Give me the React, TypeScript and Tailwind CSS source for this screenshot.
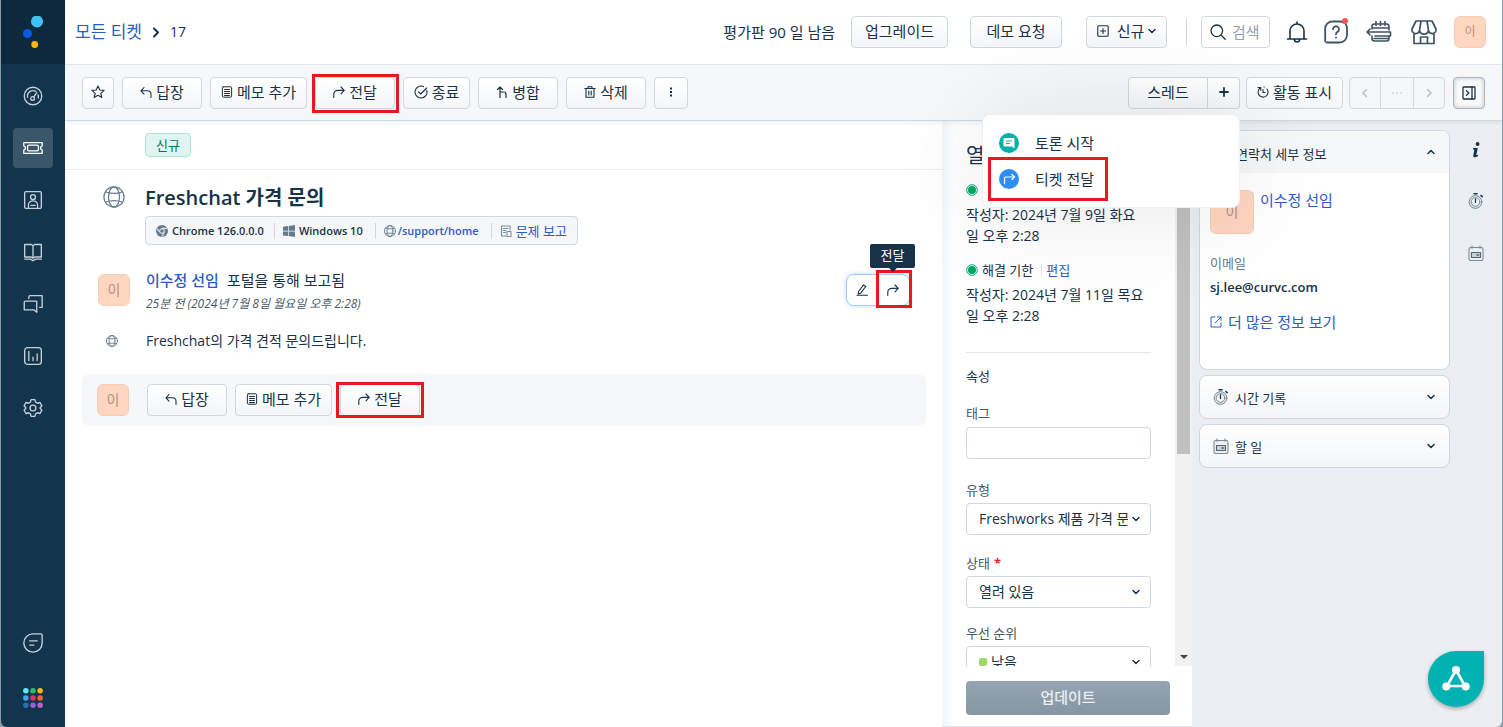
import React from "react";

type P = { className?: string };

function Svg({ className = "size-4", w = 1.5, children, box = 24 }: { className?: string; w?: number; children: React.ReactNode; box?: number }) {
  return (
    <svg className={`shrink-0 ${className}`} viewBox={`0 0 ${box} ${box}`} fill="none" stroke="currentColor" strokeWidth={w} strokeLinecap="round" strokeLinejoin="round" aria-hidden="true">
      {children}
    </svg>
  );
}

const Reply = ({ className = "size-3" }: P) => (
  <Svg className={className} box={12} w={1.1}><path d="M4 1.500 1 4.800l3 3.300M1 4.800h6.200c2.300 0 3.800 1.400 3.800 3.400v3.300" /></Svg>
);
const Forward = ({ className = "size-3" }: P) => (
  <Svg className={className} box={12} w={1.1}><path d="m8 1 3.200 3.400L8 7.800M11.200 4.400H5C2.400 4.400.8 5.900.8 8v3.500" /></Svg>
);
const Note = () => (
  <Svg className="size-3" box={12} w={1}><path d="M2.200.8h7.600a.8.8 0 0 1 .8.8v8.600a1 1 0 0 1-1 1H2.400a1 1 0 0 1-1-1V1.600a.8.8 0 0 1 .8-.8ZM3.500 3.500h5M3.500 5.500h5M3.500 7.500h5M3.500 9.500h5" /></Svg>
);
const Globe = ({ className = "size-3", w = 1.5 }: P & { w?: number }) => (
  <Svg className={className} w={w}>
    <circle cx="12" cy="12" r="11" />
    <ellipse cx="12" cy="12" rx="6" ry="11" />
    <path d="M3 6.500c5 1.800 13 1.800 18 0M3 17.500c5-1.800 13-1.800 18 0" />
  </Svg>
);
const Chevron = ({ className = "size-2" }: P) => (
  <Svg className={className} box={8} w={1.5}><path d="m1 2.500 3 3 3-3" /></Svg>
);
const Stopwatch = () => (
  <Svg className="size-4" box={16} w={1}>
    <g className="text-[#7c8996]">
      <circle cx="7.500" cy="9" r="6.400" stroke="currentColor" fill="#dfe4e9" />
      <circle cx="7.500" cy="9" r="4.300" stroke="currentColor" fill="#f5f7f9" />
    </g>
    <path d="M6 .8h3M13 2.600l1.200 1" stroke="#12344d" strokeWidth="1.600" />
    <path d="M7.500 6v3.500" stroke="#12344d" strokeWidth="1.300" />
  </Svg>
);
const Calendar = () => (
  <Svg className="size-4" box={16} w={1.100}>
    <g stroke="#7c8996">
      <rect x="1" y="2.500" width="14" height="13" rx="1.800" fill="#eef1f4" />
      <path d="M4 .8v2.400M12 .8v2.400" />
      <rect x="3.500" y="7.500" width="9" height="5" fill="#c9d1d9" stroke="#526475" />
      <path d="M9 10h1.500" stroke="#526475" strokeWidth="1.600" />
    </g>
  </Svg>
);

const btn = "flex h-8 items-center justify-center gap-1 rounded border border-[#cfd7df] bg-linear-to-b from-white to-[#f3f5f7] pb-0.5 text-[15px] leading-5 text-[#183247] whitespace-nowrap";

function RedBox({ className }: { className: string }) {
  return <span aria-hidden="true" className={`pointer-events-none absolute border-3 border-[#e8191c] ${className}`} />;
}

function Avatar({ className = "size-8 text-sm" }: P) {
  return <span className={`flex shrink-0 items-center justify-center rounded-md border border-[#f5ccb4] bg-[#ffd6c0] text-[#b3907c] ${className}`}>이</span>;
}

const nav = [
  { label: "대시보드", icon: <><circle cx="12" cy="12" r="10.500" /><path d="M5.500 13.500a6.700 6.700 0 0 1 10-7M18 10.500a6.500 6.500 0 0 1 .3 4M12.800 13.200l3.700-5.200" /><circle cx="11.500" cy="15" r="2.200" /></> },
  { label: "티켓", icon: <><path d="M1 5.500h22v4a2.600 2.600 0 0 0 0 5v4H1v-4a2.600 2.600 0 0 0 0-5Z" /><rect x="5.500" y="8.500" width="13" height="7" rx="1.800" /></> },
  { label: "연락처", icon: <><rect x="2" y="2" width="20" height="20" rx="1.500" /><circle cx="12" cy="8.500" r="3" /><path d="M6.500 21.500v-3.500a5.500 5 0 0 1 11 0v3.500M9.500 18.500h5" /></> },
  { label: "솔루션", icon: <><path d="M2 3h8l2 1.500L14 3h8v15h-8l-2 1.500L10 18H2ZM12 4.500v15M2 20.500h7l3 2 3-2h7" /></> },
  { label: "포럼", icon: <><path d="M7 5.500V3.500A1.500 1.500 0 0 1 8.500 2H23v14h-3M1.500 10A1.500 1.500 0 0 1 3 8.500h13.500v13.500L13 19H1.500Z" /></> },
  { label: "분석", icon: <><rect x="2" y="2" width="20" height="20" rx="3.500" /><path d="M7 6.500v11M12 13.500v4M17 9.500v8" /></> },
  { label: "관리자", icon: <><path d="M9.700 2h4.600l.8 3 2.300 1.300 3-.9 2.300 4-2.200 2.200v.8l2.200 2.200-2.300 4-3-.9-2.300 1.300-.8 3H9.700l-.8-3-2.300-1.300-3 .9-2.300-4 2.200-2.200v-.8L1.300 9.400l2.300-4 3 .9L8.900 5Z" /><circle cx="12" cy="12" r="3.500" /></> },
];

function Sidebar() {
  const dots = ["#5fe9f0", "#2dbd6e", "#ffb800", "#4a9ff5", "#d7375f", "#f26522", "#2c6cb0", "#9c5fd0", "#c45fd0"];
  return (
    <nav className="flex w-16 shrink-0 flex-col items-center rounded-bl-md bg-[#12344d] text-[#c5d0d9]" aria-label="주 메뉴">
      <a href="#home" aria-label="Freshdesk" className="flex h-16 w-full items-center justify-center bg-[#0e293d]">
        <svg className="size-8" viewBox="0 0 32 32">
          <circle cx="20" cy="5.500" r="6" fill="#40c4f5" />
          <circle cx="10.500" cy="17.500" r="4.500" fill="#0a5be0" />
          <circle cx="17.700" cy="28.500" r="3.400" fill="#fcb900" />
        </svg>
      </a>
      <div className="flex flex-col gap-3 pt-3">
        {nav.map((n, i) => (
          <a key={n.label} href="#nav" aria-label={n.label} className={`flex size-10 items-center justify-center rounded ${i === 1 ? "bg-[#3a566b] text-white" : ""}`}>
            <Svg className="size-5" w={1.6}>{n.icon}</Svg>
          </a>
        ))}
      </div>
      <div className="mt-auto flex flex-col items-center gap-[35px] pb-[19px]">
        <a href="#chat" aria-label="채팅"><Svg className="size-5" w={1.600}><path d="M12 1h9a2 2 0 0 1 2 2v9A11 11 0 1 1 12 1ZM8 9.500h9M8 14.500h5" /></Svg></a>
        <a href="#apps" aria-label="앱 전환">
          <svg className="size-5" viewBox="0 0 21 21">
            {dots.map((c, i) => <circle key={c} cx={3 + (i % 3) * 7.500} cy={3 + Math.floor(i / 3) * 7.500} r="2.900" fill={c} />)}
          </svg>
        </a>
      </div>
    </nav>
  );
}

function Header() {
  return (
    <header className="flex h-[65px] shrink-0 items-center border-b border-[#e4e8ed] bg-white pr-4 pl-[10px] text-[#183247]">
      <a href="#tickets" className="text-[17px] leading-6 text-[#2c5cc5]">모든 티켓</a>
      <Svg className="mx-2 size-3" box={12} w={2}><path d="m4 2.500 4 4-4 4" /></Svg>
      <span className="text-[14px] leading-6">17</span>
      <span className="mr-4 ml-auto text-[15px] leading-5">평가판 90 일 남음</span>
      <button className={`${btn} w-[97px]`}>업그레이드</button>
      <button className={`${btn} ml-[22px] w-[92px]`}>데모 요청</button>
      <button className={`${btn} ml-6 w-[81px]`}>
        <Svg className="size-3" box={12} w={1.1}><rect x=".8" y=".8" width="10.400" height="10.400" rx="1" /><path d="M6 3.500v5M3.500 6h5" /></Svg>
        <span className="pl-1">신규</span><Chevron />
      </button>
      <span className="mr-[14px] ml-[19px] h-7 w-px bg-[#cfd7df]" />
      <label className="flex h-8 w-[69px] items-center gap-1.5 rounded border border-[#cfd7df] pl-2">
        <Svg className="size-4" box={16} w={1.3}><circle cx="6.800" cy="6.800" r="5.800" /><path d="m11 11 4.200 4.200" /></Svg>
        <input aria-label="검색" placeholder="검색" className="w-9 text-[15px] leading-5 outline-none placeholder:text-[#92a2b1]" />
      </label>
      <button aria-label="알림" className="ml-4">
        <Svg className="size-[22px]" box={22} w={1.6}><path d="M1.500 18h19M4 18v-8a7 7 0 0 1 14 0v8M11 3V1M8.500 18.500a2.500 2.500 0 0 0 5 0" /></Svg>
      </button>
      <button aria-label="도움말" className="relative ml-4 text-[#3f5366]">
        <Svg className="size-6" w={1.800}><path d="M8 1.500h8a6.500 6.500 0 0 1 7 7V15a7.500 7.500 0 0 1-7.500 7.500H3A1.800 1.800 0 0 1 1.200 20.700V8.500A7 7 0 0 1 8 1.500ZM9 9.300a3 3 0 1 1 4.500 2.600c-1 .6-1.500 1.100-1.500 2.300M12 17.300v.3" /></Svg>
        <span className="absolute -top-0.5 right-0 size-1.5 rounded-full bg-[#ff5550]" />
      </button>
      <button aria-label="일정" className="ml-[18px] text-[#3f5366]">
        <Svg className="size-[26px]" box={26} w={1.600}><path d="M6 10V7.500A2.500 2.500 0 0 1 8.500 5h12A2.500 2.500 0 0 1 23 7.500V11M6 9h17M6 17v2.500A2.500 2.500 0 0 0 8.500 22h12a2.500 2.500 0 0 0 2.500-2.500V17M10 2.500v4M14.500 2.500v4M19 2.500v4M1 13h23.500v4H9M4 10l-3 3 3 3M8 19.500h14" /></Svg>
      </button>
      <button aria-label="마켓플레이스" className="ml-[19px] text-[#3f5366]">
        <Svg className="size-[26px]" box={26} w={1.700}><path d="M5 2h16l4 8a3.800 3.800 0 0 1-7.500 1.500 4.600 4.600 0 0 1-9 0A3.800 3.800 0 0 1 1 10ZM10 2l-1.500 9.500M16 2l1.500 9.500M3 14v10.500h20V14M9.500 24v-6h7v6" /></Svg>
      </button>
      <button aria-label="프로필" className="ml-[17px]"><Avatar className="size-8 text-xs" /></button>
    </header>
  );
}

function ThreadMenu() {
  return (
    <div role="menu" className="absolute top-[37px] right-0 z-20 flex w-[258px] flex-col rounded-lg border border-[#ebeff3] bg-white py-[10px] shadow-[0_4px_100px_rgba(0,0,0,0.1)]">
      <button role="menuitem" className="flex h-9 items-center gap-4 pl-4 text-left text-[15px] leading-5 text-[#183247]">
        <svg className="size-5" viewBox="0 0 20 20"><circle cx="10" cy="10" r="10" fill="#00b3a6" /><path d="M5.500 5h9a1 1 0 0 1 1 1v9.500L13 13.500H5.500a1 1 0 0 1-1-1V6a1 1 0 0 1 1-1Z" fill="#fff" /><path d="M7 8h6M7 10.500h4" stroke="#00b3a6" /></svg>
        토론 시작
      </button>
      <button role="menuitem" className="relative flex h-9 items-center gap-4 pl-4 text-left text-[15px] leading-5 text-[#183247]">
        <svg className="size-5" viewBox="0 0 20 20"><circle cx="10" cy="10" r="10" fill="#2c8df5" /><path d="M5.500 15V9.500A1.500 1.500 0 0 1 7 8h8.500M12.500 5l3 3-3 3" fill="none" stroke="#fff" strokeWidth="1.200" /></svg>
        티켓 전달
        <RedBox className="-top-1 left-[5px] h-11 w-[120px]" />
      </button>
    </div>
  );
}

function Toolbar() {
  return (
    <div className="relative z-10 flex h-14 shrink-0 items-center gap-2 border-b border-[#cfd7df] bg-[#f5f7f9] pr-[17px] pl-[17px] text-[#183247] shadow-[0_2px_4px_rgba(24,50,71,0.07)]">
      <button aria-label="즐겨찾기" className={`${btn} w-8`}>
        <Svg className="size-[14px]" box={14} w={1.1}><path d="m7 1 1.800 4 4.300.4-3.300 2.900 1 4.200L7 10.300l-3.800 2.200 1-4.200L.9 5.400 5.200 5Z" /></Svg>
      </button>
      <button className={`${btn} w-20`}><Reply />답장</button>
      <button className={`${btn} w-[97px]`}><Note />메모 추가</button>
      <div className="relative">
        <button className={`${btn} w-20`}><Forward />전달</button>
        <RedBox className="-top-[3px] -left-[3px] h-[39px] w-[87px]" />
      </div>
      <button className={`${btn} w-[67px]`}>
        <Svg className="size-[14px]" box={14} w={1.1}><path d="M12.800 5.500A6 6 0 1 1 9.500 1.600M4.500 6.800l2.200 2.200 6-6" /></Svg>종료
      </button>
      <button className={`${btn} w-20`}>
        <Svg className="size-3" box={12} w={1.200}><path d="M4 11.500V1M1.500 3.500 4 1l2.500 2.500M4 6h4c1.500 0 2 .8 2 2v3.500" /></Svg>병합
      </button>
      <button className={`${btn} w-20`}>
        <Svg className="size-3" box={12} w={1.1}><path d="M.8 2.500h10.400M4 2.300V.8h4v1.500M2 2.700v8.500h8V2.700M4.800 5v4M7.200 5v4" /></Svg>삭제
      </button>
      <button aria-label="더 보기" className={`${btn} w-[34px]`}>
        <svg className="size-3" viewBox="0 0 12 12" fill="currentColor"><rect x="5" y="1.500" width="2" height="2" /><rect x="5" y="5" width="2" height="2" /><rect x="5" y="8.500" width="2" height="2" /></svg>
      </button>
      <div className="ml-auto flex items-center gap-1.5">
        <div className="relative flex">
          <button className={`${btn} w-20 rounded-r-none`}>스레드</button>
          <button aria-label="스레드 추가" className={`${btn} w-8 rounded-l-none border-l-0`}>
            <Svg className="size-[10px]" box={10} w={1.800}><path d="M5 1v8M1 5h8" /></Svg>
          </button>
          <ThreadMenu />
        </div>
        <button className={`${btn} w-[97px]`}>
          <Svg className="size-3" box={12} w={1.1}><path d="M3.500 1.800a5 5 0 1 0 6.500 1.200M1 1.500h2.800v2.700M6 3.500V6.500h2M7 1h.2" /></Svg>활동 표시
        </button>
        <div className="flex rounded border border-[#cfd7df] text-[#b5c0ca]">
          <button aria-label="이전" className="flex h-[30px] w-[30px] items-center justify-center"><Svg className="size-2.5" box={10} w={1.500}><path d="M6.500 1.500 3 5l3.500 3.500" /></Svg></button>
          <button aria-label="목록" className="flex h-[30px] w-[34px] items-center justify-center border-x border-[#cfd7df]"><Svg className="size-2.5" box={10} w={1.500}><path d="M1 5h.1M5 5h.1M9 5h.1" /></Svg></button>
          <button aria-label="다음" className="flex h-[30px] w-[30px] items-center justify-center"><Svg className="size-2.5" box={10} w={1.500}><path d="M3.500 1.500 7 5 3.500 8.500" /></Svg></button>
        </div>
      </div>
      <button aria-label="패널 접기" className="flex size-8 items-center justify-center rounded border border-[#a9b6c2] bg-[#f8f9fa] shadow-[inset_0_0_4px_rgba(24,50,71,0.25)]">
        <Svg className="size-3.5" box={14} w={1.300}><rect x="1" y="1" width="12" height="12" rx=".8" /><path d="M10 1v12M4.500 4.800 6.800 7 4.500 9.200" /></Svg>
      </button>
    </div>
  );
}

function Conversation() {
  return (
    <main className="flex min-w-0 flex-1 flex-col bg-white text-[#183247]">
      <div className="flex h-[49px] shrink-0 items-center border-b border-[#ebeff3] pl-20">
        <span className="rounded border border-[#abe5d2] bg-[#e0f5f1] px-2.5 text-[13px] leading-[22px] text-[#00795b]">신규</span>
      </div>
      <div className="flex pt-3 pl-[38px]">
        <Globe className="mt-1 size-[22px] text-[#647a8e]" w={1.300} />
        <div className="ml-5 min-w-0">
          <h1 className="text-[20px] leading-8 font-semibold">Freshchat 가격 문의</h1>
          <ul className="mt-0.5 flex h-[29px] w-fit items-center rounded border border-[#cfd7df] bg-[#f5f7f9] text-[12px] leading-4 font-semibold whitespace-nowrap">
            <li className="flex items-center gap-1 pr-2.5 pl-2.5 text-[11px]">
              <svg className="size-3" viewBox="0 0 12 12"><circle cx="6" cy="6" r="6" fill="#647a8e" /><path d="M6 3.300h5.300M3.600 7.300 1 3.300M8.300 7.500 6 11.700" stroke="#f5f7f9" /><circle cx="6" cy="6" r="2.300" fill="#647a8e" stroke="#f5f7f9" /></svg>
              Chrome 126.0.0.0
            </li>
            <li className="flex items-center gap-1 border-l border-[#cfd7df] pr-3 pl-2 text-[11px]">
              <svg className="size-3" viewBox="0 0 12 12" fill="#647a8e"><path d="M0 1.700 5 1v4.700H0ZM5.700.9 12 0v5.700H5.700ZM0 6.400h5v4.700l-5-.7ZM5.700 6.400H12V12l-6.300-.9Z" /></svg>
              Windows 10
            </li>
            <li className="flex items-center gap-0.5 border-l border-[#cfd7df] pr-3 pl-2 text-[11px]">
              <Globe className="size-3 text-[#647a8e]" w={1.800} />
              <a href="#support" className="text-[#2c5cc5]">/support/home</a>
            </li>
            <li className="flex items-center gap-1 border-l border-[#cfd7df] pr-2.5 pl-2">
              <Svg className="size-3 text-[#7c8fa0]" box={12} w={1.1}><path d="M10 5V1H1.500v10H6M3.500 3.500H8M3.500 5.500H6M3.500 7.500h2" /><rect x="7" y="6.500" width="4" height="5" /></Svg>
              <a href="#report" className="text-[13px] font-normal text-[#2c5cc5]">문제 보고</a>
            </li>
          </ul>
        </div>
      </div>

      <div className="flex items-start pt-[23px] pr-8 pl-[33px]">
        <Avatar className="mt-1.5 size-8 text-sm" />
        <div className="ml-4">
          <p className="text-[15px] leading-6"><a href="#requester" className="mr-2 font-medium text-[#2c5cc5]">이수정 선임</a>포털을 통해 보고됨</p>
          <p className="text-[12px] leading-6 text-[#475867] italic">25분 전 (2024년 7월 8일 월요일 오후 2:28)</p>
        </div>
        <div className="relative mt-1.5 ml-auto flex h-8 rounded-lg border border-[#a5c8f8] shadow-[0_0_4px_rgba(44,140,245,0.35)]">
          <button aria-label="편집" className="flex w-[30px] items-center justify-center">
            <Svg className="size-3" box={12} w={1.1}><path d="M2.500 7.500 7.500.9l2.200 1.600-5 6.700-2.500.8ZM1 11.300h10.500" /></Svg>
          </button>
          <button aria-label="전달" className="flex w-8 items-center justify-center"><Forward /></button>
          <RedBox className="-top-[5px] right-[-3px] h-[38px] w-9" />
          <span role="tooltip" className="absolute right-[-6px] bottom-[37px] flex h-6 w-[45px] items-center justify-center rounded-xs bg-[#183247] pb-px text-[13px] text-white">
            전달
            <svg className="absolute top-6 h-1 w-2" viewBox="0 0 8 4"><path d="M0 0h8L4 4Z" fill="#183247" /></svg>
          </span>
        </div>
      </div>
      <div className="flex items-center pt-[13px] pl-[41px]">
        <Globe className="size-3 text-[#647a8e]" w={1.800} />
        <p className="ml-7 text-[14px] leading-6">Freshchat의 가격 견적 문의드립니다.</p>
      </div>

      <div className="mt-[21px] mr-4 ml-[17px] flex h-[52px] shrink-0 items-center gap-2 rounded-lg bg-[#f5f7f9] pl-[15px]">
        <Avatar className="mr-[10px] size-8 text-sm" />
        <button className={`${btn} w-20`}><Reply />답장</button>
        <button className={`${btn} w-[97px]`}><Note />메모 추가</button>
        <div className="relative">
          <button className={`${btn} w-20`}><Forward />전달</button>
          <RedBox className="-top-0.5 -left-1 h-9 w-[88px]" />
        </div>
      </div>
    </main>
  );
}

function Field({ id, label, required, dot, value, className }: { id: string; label: string; required?: boolean; dot?: boolean; value: string; className: string }) {
  return (
    <div className={className}>
      <label htmlFor={id} className="block text-[13px] leading-5 text-[#475867]">{label}{required && <span className="ml-1 font-bold text-[#d72d30]">*</span>}</label>
      <div className="mt-[3px] flex h-8 items-center rounded border border-[#cfd7df] pr-2.5 pb-px pl-3">
        {dot && <span className="size-2 shrink-0 rounded-xs bg-[#a0d76a]" />}
        <select id={id} className={`min-w-0 flex-1 appearance-none overflow-hidden text-[14px] leading-6 text-[#183247] outline-none ${dot ? "pl-1" : ""}`}>
          <option>{value}</option>
        </select>
        <Chevron className="ml-1 size-2" />
      </div>
    </div>
  );
}

function Status({ label, edit, date, className = "" }: { label: string; edit?: string; date: string; className?: string }) {
  return (
    <div className={className}>
      <div className="flex items-center gap-1 text-[13px] leading-5">
        <svg className="size-3" viewBox="0 0 12 12"><circle cx="6" cy="6" r="5.300" fill="#fff" stroke="#00a886" /><circle cx="6" cy="6" r="4" fill="#00a862" /></svg>
        <span>{label}</span>
        {edit && <a href="#edit" className="ml-1 border-l border-[#dfe4e9] pl-1 leading-3 text-[#2c5cc5]">{edit}</a>}
      </div>
      <p className="mt-1 pr-1.5 text-[14px] leading-[21px] break-all">{date}</p>
    </div>
  );
}

function Properties() {
  return (
    <aside className="flex w-[250px] shrink-0 flex-col bg-linear-to-r from-[#f3f5f8] to-white to-5% text-[#183247]">
      <div className="flex min-h-0 flex-1">
        <div className="h-0 min-h-full flex-1 overflow-hidden pr-6 pl-6">
          <h2 className="pt-[21px] text-[20px] leading-7">열림</h2>
          <Status className="pt-[10px]" label="응답" date="작성자: 2024년 7월 9일 화요일 오후 2:28" />
          <Status className="pt-[14px]" label="해결 기한" edit="편집" date="작성자: 2024년 7월 11일 목요일 오후 2:28" />
          <hr className="mt-[26px] border-[#e4e8ed]" />
          <h3 className="mt-[13px] text-[13px] leading-5">속성</h3>
          <label htmlFor="tags" className="mt-[17px] block text-[13px] leading-5 text-[#475867]">태그</label>
          <input id="tags" className="mt-1 h-8 w-full rounded border border-[#cfd7df] px-3 text-sm outline-none" />
          <Field className="mt-[21px]" id="type" label="유형" value="Freshworks 제품 가격 문의" />
          <Field className="mt-[18px]" id="status" label="상태" required value="열려 있음" />
          <Field className="mt-[15px]" id="priority" label="우선 순위" dot value="낮음" />
        </div>
        <div className="flex w-[17px] shrink-0 flex-col items-center bg-[#f1f1f1]" aria-hidden="true">
          <span className="h-[333px] w-[13px] bg-[#c1c1c1]" />
          <svg className="mt-auto mb-1.5 h-1.5 w-2" viewBox="0 0 8 6"><path d="M0 1h8L4 5Z" fill="#444" /></svg>
        </div>
      </div>
      <div className="flex h-[61px] shrink-0 border-b border-[#e4e8ed] pt-[15px] pr-[22px] pl-6">
        <button className="h-[34px] flex-1 rounded bg-linear-to-b from-[#94a4b2] to-[#8796a3] pb-0.5 text-[15px] leading-5 font-medium text-[#eceff2]">업데이트</button>
      </div>
    </aside>
  );
}

function Contact() {
  const card = "flex h-11 items-center rounded-lg border border-[#cfd7df] bg-linear-to-b from-white to-[#f3f5f7] pr-3.5 pl-[13px] text-left text-[13px] leading-5 text-[#183247]";
  return (
    <section className="flex w-[310px] shrink-0 bg-[#ebeef3] pl-[7px] text-[#183247]">
      <div className="flex w-[251px] flex-col gap-[5px] pt-[9px]">
        <div className="h-60 overflow-hidden rounded-lg border border-[#cfd7df] bg-white">
          <button className="flex h-[42px] w-full items-center bg-[#f5f7f9] pt-1 pr-3.5 pl-9 text-[13px] leading-5">
            연락처 세부 정보<Chevron className="mb-1 ml-auto size-2 rotate-180" />
          </button>
          <div className="px-2.5 pt-[17px]">
            <div className="flex gap-1.5">
              <Avatar className="size-11 text-sm" />
              <a href="#contact" className="text-[15px] leading-5 text-[#2c5cc5]">이수정 선임</a>
            </div>
            <p className="mt-[19px] text-[13px] leading-5 text-[#647a8e]">이메일</p>
            <p className="mt-1 text-[13px] leading-5 font-semibold">sj.lee@curvc.com</p>
            <a href="#more" className="mt-[15px] flex items-center gap-1.5 text-[15px] leading-5 text-[#2c5cc5]">
              <Svg className="size-3" box={12} w={1}><path d="M5 1H1v10h10V7M7.500 1H11v3.500M11 1 5 7" /></Svg>
              더 많은 정보 보기
            </a>
          </div>
        </div>
        <button className={card}><Stopwatch /><span className="pt-0.5 pl-1.5">시간 기록</span><Chevron className="ml-auto size-2" /></button>
        <button className={card}><Calendar /><span className="pt-0.5 pl-1.5">할 일</span><Chevron className="ml-auto size-2" /></button>
      </div>
      <div className="flex flex-1 flex-col items-center">
        <button aria-label="정보" className="mt-[19px] h-5"><svg className="h-4 w-2" viewBox="0 0 8 16" fill="#183247"><circle cx="5.600" cy="2" r="1.900" /><path d="M1.200 6h4.600L4.300 13c0 .6.800.400 1.700-.4v1.500C3.700 16 .8 15.800 1.300 13.300L2.400 7.500H.9Z" /></svg></button>
        <button aria-label="시간 기록" className="mt-[33px]"><Stopwatch /></button>
        <button aria-label="할 일" className="mt-9"><Calendar /></button>
      </div>
      <button aria-label="앱 열기" className="fixed right-[19px] bottom-5 flex size-14 items-center justify-center rounded-full rounded-tr-md bg-[#00b2b2] shadow-[0_2px_4px_rgba(0,0,0,0.3)]">
        <svg className="size-7" viewBox="0 0 28 28" fill="#fff"><path d="M14 5 5 21h18Z" fill="none" stroke="#fff" strokeWidth="2.600" /><circle cx="14" cy="5" r="4" /><circle cx="4.300" cy="21.500" r="4" /><circle cx="23.700" cy="21.500" r="4" /></svg>
      </button>
    </section>
  );
}

export default function App() {
  return (
    <div className="flex min-h-screen border-x border-[#8b9aa8] bg-[#8b9aa8] font-['Open_Sans','Noto_Sans_CJK_KR',sans-serif]">
      <Sidebar />
      <div className="flex min-w-0 flex-1 flex-col overflow-hidden rounded-br-md">
        <Header />
        <Toolbar />
        <div className="flex flex-1">
          <Conversation />
          <Properties />
          <Contact />
        </div>
      </div>
    </div>
  );
}
